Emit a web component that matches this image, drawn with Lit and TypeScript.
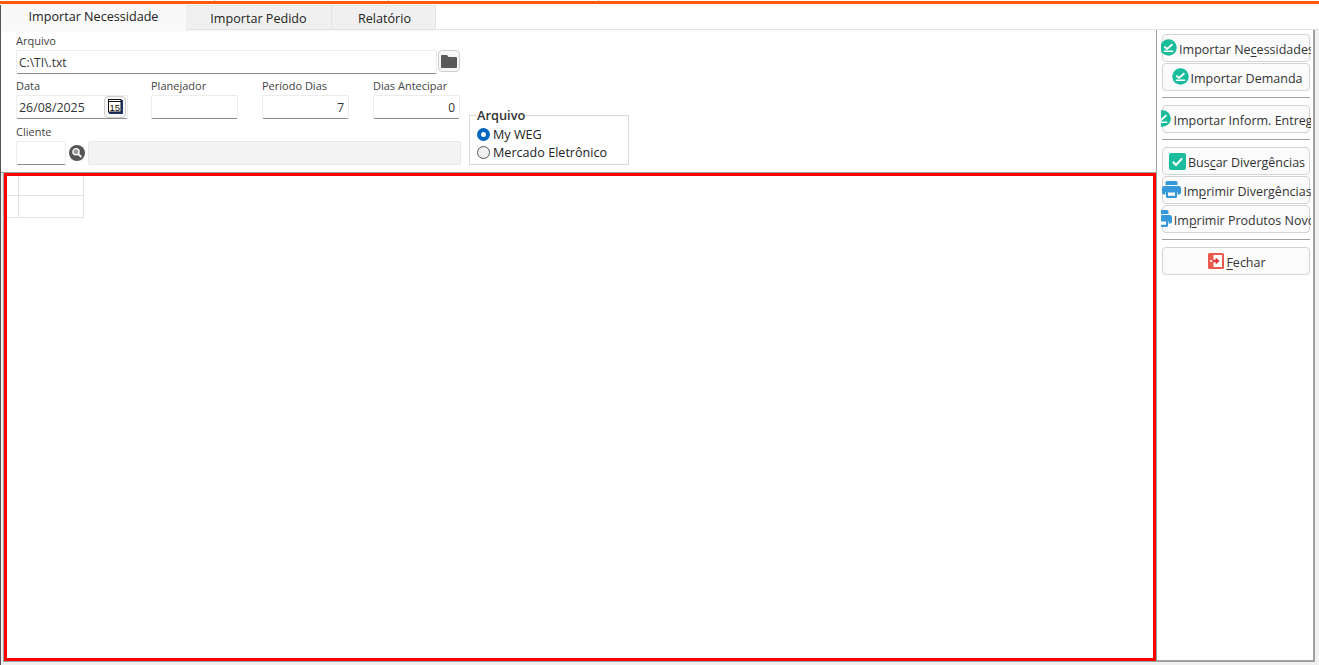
import { LitElement, html, css } from "lit";
import { customElement } from "lit/decorators.js";

const checkCircle = html`<svg class="ic up" width="17" height="17" viewBox="0 0 17 17"><circle cx="8.500" cy="8.500" r="8.300" fill="#1abc9c"/><path d="M4.300 7.600l2.700 2.300 5.400-4.700" fill="none" stroke="#fff" stroke-width="1.900"/><path d="M3.800 12.300h9.400" stroke="#fff" stroke-width="1.500"/></svg>`;
const checkSquare = html`<svg class="ic" width="17" height="17" viewBox="0 0 17 17"><rect width="17" height="17" rx="2" fill="#1abc9c"/><path d="M3.800 8.800l3.200 3.200 6.200-6.600" fill="none" stroke="#fff" stroke-width="2"/></svg>`;
const printer = html`<svg class="ic up" width="19" height="17" viewBox="0 0 19 17"><path d="M5 0h9a1.500 1.500 0 0 1 1.500 1.500V4h-12V1.500A1.500 1.500 0 0 1 5 0z" fill="#3498db"/><path d="M2.500 5h14A2.500 2.500 0 0 1 19 7.500v4a2 2 0 0 1-2 2h-1.500V11h-12v2.500H2a2 2 0 0 1-2-2v-4A2.500 2.500 0 0 1 2.500 5z" fill="#3498db"/><path d="M4 11h11v4.500a1.500 1.500 0 0 1-1.500 1.500h-8A1.500 1.500 0 0 1 4 15.500z" fill="#3498db"/><path d="M6 11.500h7v3.300H6z" fill="#fff"/></svg>`;
const exitIcon = html`<svg class="ic" width="16" height="16" viewBox="0 0 16 16"><rect width="16" height="16" rx="1.500" fill="#ea5a4e"/><rect x="5.500" y="2" width="8.500" height="12" fill="#fff"/><path d="M3.500 6.800h4.200V4.500L11.500 8l-3.800 3.500V9.200H3.500z" fill="#e53935"/><path d="M2 7.200h2.500v1.600H2z" fill="#fff"/></svg>`;

@customElement("app-root")
export class AppRoot extends LitElement {
  static styles = css`
    :host { display: flex; flex-direction: column; width: 1319px; height: 665px; overflow: hidden; background: #f0f0f0;
      font-family: "Open Sans", "Noto Sans", sans-serif; font-size: 12px; color: #222; box-sizing: border-box; }
    * { box-sizing: border-box; }
    .top { height: 5px; flex: none; padding-top: 1px;
      background: linear-gradient(#d9b89c, #d9b89c) no-repeat 214px 0 / 1px 1px,
        linear-gradient(#d9b89c, #d9b89c) no-repeat 388px 0 / 1px 1px,
        linear-gradient(#d9b89c, #d9b89c) no-repeat 598px 0 / 1px 1px, #fff; }
    .bar { height: 3px; background: #ff5a0a; }
    .frame { flex: 1; display: flex; flex-direction: column; border-left: 1px solid #555; min-height: 0; background: #fff; }
    .tabs { flex: none; height: 25px; display: flex; align-items: flex-end; background: #fff; border-bottom: 1px solid #e3e3e3; }
    .tab { height: 24px; display: flex; align-items: center; justify-content: center; font-size: 12.600px; color: #222;
      background: #f0f0f0; border: 1px solid #e3e3e3; border-bottom: none; border-left: none; padding-top: 2px; }
    .tab.active { height: 26px; margin-bottom: -1px; background: #f9f9f9; border: none; width: 185px; padding-top: 0; padding-bottom: 2px; }
    .t2 { width: 146px; }
    .t3 { width: 104px; padding-left: 2px; }
    .content { flex: 1; display: flex; min-height: 0; background: #f0f0f0; }
    .main { flex: none; width: 1155px; display: flex; flex-direction: column; padding-bottom: 3px; background: #f0f0f0; }
    .form { flex: none; height: 143px; display: flex; background: linear-gradient(#f9f9f9 0, #fff 4px); padding-left: 15px; border-bottom: 1px solid #a0a0a0; }
    .fields { width: 446px; flex: none; display: flex; flex-direction: column; padding-top: 3px; }
    .lbl { height: 17px; line-height: 15px; font-size: 11px; color: #444; display: block; white-space: nowrap; }
    .row { display: flex; }
    .fld { display: flex; flex-direction: column; }
    .input { height: 24px; background: #fff; border: 1px solid #ececec; border-bottom: 1px solid #8c8c8c; border-radius: 2px;
      display: flex; align-items: center; padding: 0 2px; font-size: 12px; color: #333; }
    .num { justify-content: flex-end; padding-right: 4px; }
    .mini { width: 22px; height: 22px; border: 1px solid #cfcfcf; border-radius: 4px; background: #f7f7f7; display: flex; align-items: center; justify-content: center; flex: none; }
    .r1 { gap: 1px; margin-bottom: 4px; }
    .r2 { gap: 0; margin-bottom: 5px; }
    .date { width: 112px; justify-content: space-between; padding-right: 0; font-size: 12.400px; }
    .date .mini { margin: 0 1px 1px 0; }
    .w87 { width: 87px; }
    .ml23 { margin-left: 23px; }
    .ml24 { margin-left: 24px; }
    .r3 { align-items: center; }
    .disabled { width: 373px; height: 24px; margin-left: 3px; background: #f3f3f3; border: 1px solid #e8e8e8; border-radius: 2px; }
    .glass { margin-left: 3px; }
    fieldset { align-self: flex-end; margin: 0 0 7px 7px; padding: 3px 0 0 7px; width: 160px; height: 57px; border: 1px solid #d9d9d9; display: flex; flex-direction: column; }
    legend { padding: 0; font-weight: 600; font-size: 12.800px; color: #333; line-height: 14px; margin-left: 0; }
    .radio { height: 18px; display: flex; align-items: center; gap: 3px; font-size: 12.600px; color: #222; white-space: nowrap; }
    .dot { width: 13px; height: 13px; border-radius: 50%; flex: none; }
    .dot.on { border: 4px solid #0067c0; background: #fff; }
    .dot.off { border: 1px solid #555; background: #f0f0f0; }
    .gridwrap { flex: 1; display: flex; min-height: 0; background: #fff; border-left: 1px solid #a0a0a0; border-bottom: 1px solid #a0a0a0; margin-left: 2px; }
    .gridbox { flex: 1; border: 3px solid #f00; background: #fff; }
    .cells { display: grid; grid-template-columns: 12px 65px; grid-template-rows: 20px 22px; width: 77px; }
    .cells div { border-right: 1px solid #e2e2e2; border-bottom: 1px solid #e2e2e2; }
    .side { flex: none; width: 159px; height: 632px; background: #fff; border: solid #a0a0a0; border-width: 0 2px 2px 1px; display: flex; flex-direction: column; padding: 4px 3px 0 5px; gap: 1px; align-self: flex-start; }
    .btn { height: 28px; flex: none; width: 148px; display: flex; align-items: center; justify-content: center; gap: 2px; padding-left: 2px; background: #fbfbfb; border: 1px solid #d4d4d4; border-radius: 4px;
      white-space: nowrap; font-size: 12.500px; color: #333; overflow: clip; overflow-clip-margin: 2px; }
    .btn span { flex: none; margin-top: 2px; }
    .btn u { text-underline-offset: 2px; }
    .ic { flex: none; display: block; }
    .up { margin-top: -2px; }
    .sep { height: 1px; flex: none; background: #a0a0a0; margin: 5px 0 6px; width: 148px; }
    .rest { flex: 1; background: #f0f0f0; }
  `;

  render() {
    return html`
      <div class="top"><div class="bar"></div></div>
      <div class="frame">
        <div class="tabs">
          <div class="tab active">Importar Necessidade</div>
          <div class="tab t2">Importar Pedido</div>
          <div class="tab t3">Relatório</div>
        </div>
        <div class="content">
          <div class="main">
            <div class="form">
              <div class="fields">
                <div class="fld">
                  <span class="lbl">Arquivo</span>
                  <div class="row r1">
                    <div class="input" style="width:421px">C:\\TI\\.txt</div>
                    <div class="mini"><svg width="16" height="14" viewBox="0 0 16 14"><path d="M1 1h5l1.500 2H15a1 1 0 0 1 1 1v9a1 1 0 0 1-1 1H1a1 1 0 0 1-1-1V2a1 1 0 0 1 1-1z" fill="#5a5a5a"/></svg></div>
                  </div>
                </div>
                <div class="row r2">
                  <div class="fld"><span class="lbl">Data</span>
                    <div class="input date">26/08/2025
                      <div class="mini"><svg width="15" height="15" viewBox="0 0 15 15"><rect x="13" y="1" width="2" height="13" fill="#223a7a"/><rect x="1" y="13" width="14" height="2" fill="#223a7a"/><rect x="0.500" y="0.500" width="12.500" height="12.500" fill="#fff" stroke="#111"/><path d="M1 2.500h12" stroke="#111"/><text x="6.800" y="11.700" font-size="9.500" font-family="Liberation Sans" text-anchor="middle" fill="#111">15</text></svg></div>
                    </div>
                  </div>
                  <div class="fld ml23"><span class="lbl">Planejador</span><div class="input w87"></div></div>
                  <div class="fld ml24"><span class="lbl">Período Dias</span><div class="input w87 num">7</div></div>
                  <div class="fld ml24"><span class="lbl">Dias Antecipar</span><div class="input w87 num">0</div></div>
                </div>
                <div class="fld">
                  <span class="lbl">Cliente</span>
                  <div class="row r3">
                    <div class="input" style="width:50px"></div>
                    <svg class="glass" width="16" height="16" viewBox="0 0 16 16"><circle cx="8" cy="8" r="8" fill="#555"/><circle cx="7" cy="6.800" r="3.100" fill="#999" stroke="#fff" stroke-width="1.300"/><path d="M9.300 9.200l3 2.800" stroke="#fff" stroke-width="1.800"/></svg>
                    <div class="disabled"></div>
                  </div>
                </div>
              </div>
              <fieldset>
                <legend>Arquivo</legend>
                <div class="radio"><span class="dot on"></span>My WEG</div>
                <div class="radio"><span class="dot off"></span>Mercado Eletrônico</div>
              </fieldset>
            </div>
            <div class="gridwrap">
              <div class="gridbox">
                <div class="cells"><div></div><div></div><div></div><div></div></div>
              </div>
            </div>
          </div>
          <div class="side">
            <div class="btn">${checkCircle}<span>Importar Ne<u>c</u>essidades</span></div>
            <div class="btn">${checkCircle}<span>Importar Demanda</span></div>
            <div class="sep"></div>
            <div class="btn">${checkCircle}<span>Importar Inform. Entre<u>g</u>a</span></div>
            <div class="sep"></div>
            <div class="btn">${checkSquare}<span>Bus<u>c</u>ar Divergências</span></div>
            <div class="btn">${printer}<span>Im<u>p</u>rimir Divergências</span></div>
            <div class="btn">${printer}<span>Im<u>p</u>rimir Produtos Novos</span></div>
            <div class="sep"></div>
            <div class="btn">${exitIcon}<span><u>F</u>echar</span></div>
          </div>
          <div class="rest"></div>
        </div>
      </div>
    `;
  }
}
